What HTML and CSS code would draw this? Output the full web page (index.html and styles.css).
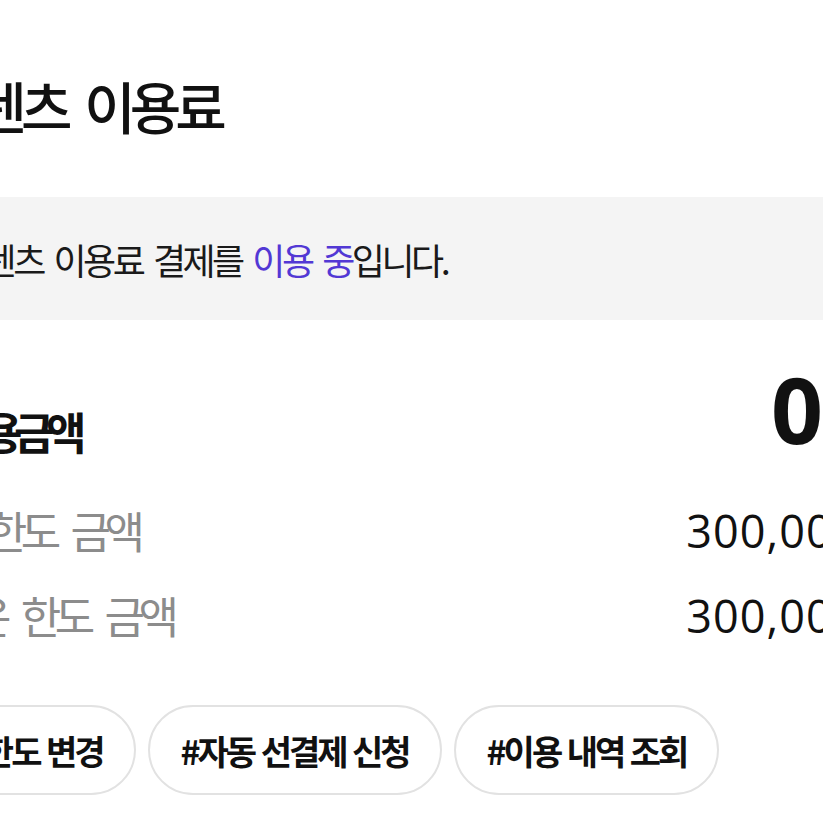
FILE: index.html
```html
<!DOCTYPE html>
<html lang="ko">

<head>
    <meta charset="UTF-8">
    <meta name="viewport" content="width=device-width, initial-scale=1.0">
    <title>콘텐츠 이용료</title>
    <link rel="stylesheet" href="styles.css">
</head>

<body>
    <div class="page">
        <h1 class="title">콘텐츠 이용료</h1>

        <!-- 이용 상태 안내 -->
        <div class="notice">
            <p>콘텐츠 이용료 결제를 <span class="accent">이용 중</span>입니다.</p>
        </div>

        <!-- 금액 정보 -->
        <div class="summary">
            <div class="row total">
                <span class="label">이용금액</span>
                <span class="value"><span class="num">0</span><span class="unit">원</span></span>
            </div>
            <div class="row">
                <span class="label">월 한도 금액</span>
                <span class="value">300,000<span class="unit">원</span></span>
            </div>
            <div class="row">
                <span class="label">남은 한도 금액</span>
                <span class="value">300,000<span class="unit">원</span></span>
            </div>
        </div>

        <!-- 바로가기 태그 -->
        <div class="tags">
            <button class="tag">#월 한도 변경</button>
            <button class="tag">#자동 선결제 신청</button>
            <button class="tag">#이용 내역 조회</button>
        </div>
    </div>
</body>

</html>
```

FILE: styles.css
```css
* {
    margin: 0;
    padding: 0;
    box-sizing: border-box;
}

html,
body {
    width: 823px;
    height: 823px;
    overflow: hidden;
}

body {
    font-family: "Noto Sans CJK KR", "Noto Sans", sans-serif;
    background-color: #ffffff;
    color: #111111;
}

/* the screen is wider than the frame: left and right edges fall outside */
.page {
    width: 902px;
}

.title {
    font-size: 56px;
    font-weight: 500;
    letter-spacing: -6px;
    word-spacing: 8px;
    line-height: 60px;
    padding-top: 75px;
    height: 197px;
    margin-left: -70px;
    white-space: nowrap;
}

.notice {
    background-color: #f4f4f4;
    height: 123px;
    display: flex;
    align-items: center;
}

.notice p {
    font-size: 36px;
    letter-spacing: -3.5px;
    word-spacing: 4px;
    line-height: 40px;
    color: #1a1a1a;
    margin-left: -46px;
    white-space: nowrap;
}

.accent {
    color: #5238d4;
}

.summary {
    padding-top: 54px;
}

.row {
    display: flex;
    justify-content: space-between;
    align-items: center;
    height: 85px;
}

.row .label {
    font-size: 44px;
    letter-spacing: -6.5px;
    word-spacing: 10px;
    color: #8c8c8c;
    margin-left: -63px;
    white-space: nowrap;
}

.row .value {
    font-family: "Open Sans", "Noto Sans CJK KR", sans-serif;
    font-size: 45px;
    letter-spacing: 1px;
    color: #111111;
    white-space: nowrap;
}

.row .unit {
    font-family: "Noto Sans CJK KR", sans-serif;
    font-size: 42px;
    margin-left: 3px;
}

.row.total {
    height: 113px;
}

.row.total .label {
    font-size: 44px;
    font-weight: 700;
    color: #111111;
    letter-spacing: -8.5px;
    margin-left: -50px;
}

.row.total .value {
    font-weight: 700;
    letter-spacing: 0;
    margin-bottom: 44px;
}

.row.total .num {
    font-size: 91px;
}

.row.total .unit {
    font-size: 63px;
    margin-left: 21px;
}

.tags {
    display: flex;
    gap: 12px;
    margin-top: 48px;
    margin-left: -102px;
}

.tag {
    font-family: inherit;
    font-size: 34px;
    font-weight: 700;
    letter-spacing: -3px;
    color: #111111;
    background-color: #ffffff;
    border: 2px solid #e2e2e2;
    border-radius: 45px;
    height: 90px;
    padding: 0 31px;
    white-space: nowrap;
}
```
